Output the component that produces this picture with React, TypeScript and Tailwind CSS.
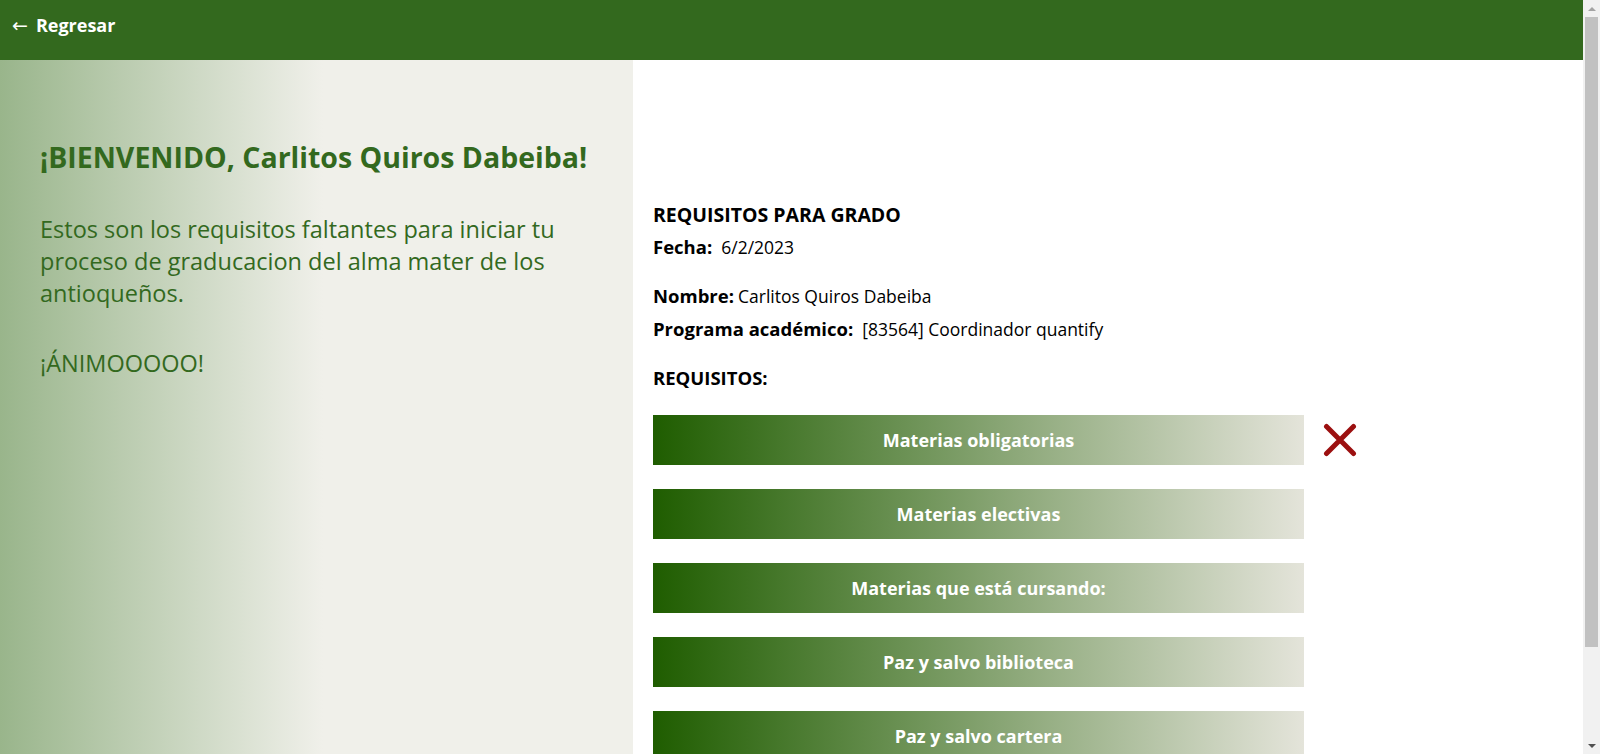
const REQUISITOS = [
  { label: "Materias obligatorias", missing: true },
  { label: "Materias electivas", missing: false },
  { label: "Materias que está cursando:", missing: false },
  { label: "Paz y salvo biblioteca", missing: false },
  { label: "Paz y salvo cartera", missing: false },
  { label: "Paz y salvo laboratorios", missing: false },
];

function MissingMark() {
  return (
    <svg width="34" height="34" viewBox="0 0 34 34" className="mt-[8px] ml-[19px] shrink-0">
      <path
        d="M3.5 3.5 L30.5 30.5 M30.5 3.5 L3.5 30.5"
        stroke="#9c1010"
        strokeWidth="5"
        strokeLinecap="round"
        fill="none"
      />
    </svg>
  );
}

export default function App() {
  return (
    <div className="h-screen flex bg-white font-['Open_Sans','Noto_Sans',sans-serif]">
      <div className="flex-1 overflow-hidden">
        <header className="h-[60px] bg-[#33691e] px-3 pt-[12px]">
          <a href="#" className="text-white text-[18px] font-bold leading-[27px]">
            <span className="font-['DejaVu_Sans',sans-serif] font-normal text-[19px] mr-[8px]">←</span>Regresar
          </a>
        </header>

        <main className="flex">
          <aside className="w-[633px] shrink-0 bg-[linear-gradient(to_right,#99b58b_0%,#f0f0ea_51%,#f0f0ea_100%)] pl-10 pr-[50px] pt-[79px] text-[#33691e]">
            <h1 className="text-[28.5px] font-bold leading-[36px] whitespace-nowrap">
              ¡BIENVENIDO, Carlitos Quiros Dabeiba!
            </h1>
            <p className="mt-[38px] text-[23.5px] leading-[32px]">
              Estos son los requisitos faltantes para iniciar tu proceso de
              graducacion del alma mater de los antioqueños.
            </p>
            <p className="mt-[38px] text-[23.5px] leading-[32px]">¡ÁNIMOOOOO!</p>
          </aside>

          <section className="flex-1 pl-5 pt-[141px] pb-[28px] text-black">
            <h2 className="text-[19.5px] font-bold leading-[28px]">
              REQUISITOS PARA GRADO
            </h2>
            <p className="mt-[2px] text-[18.5px] leading-[32px]">
              <span className="font-bold">Fecha:</span>
              <span className="ml-[9px] text-[17.5px]">6/2/2023</span>
            </p>

            <div className="mt-[16px]">
              <p className="text-[18.5px] leading-[33px]">
                <span className="font-bold">Nombre:</span>
                <span className="ml-[4px] text-[17.5px]">Carlitos Quiros Dabeiba</span>
              </p>
              <p className="text-[18.5px] leading-[32px]">
                <span className="font-bold">Programa académico:</span>
                <span className="ml-[9px] text-[17.5px]">[83564] Coordinador quantify</span>
              </p>
            </div>

            <h3 className="mt-[18px] text-[18.5px] font-bold leading-[30px]">
              REQUISITOS:
            </h3>

            <div className="mt-[22px] flex flex-col gap-6">
              {REQUISITOS.map((r) => (
                <div key={r.label} className="flex items-start">
                  <button className="w-[651px] h-[50px] shrink-0 bg-[linear-gradient(to_right,#1f5d00,#e4e4da)] text-white text-[18px] font-bold">
                    {r.label}
                  </button>
                  {r.missing && <MissingMark />}
                </div>
              ))}
            </div>
          </section>
        </main>
      </div>

      {/* scrollbar */}
      <div className="w-[17px] shrink-0 bg-[#f1f1f1] flex flex-col items-center">
        <div className="h-[17px] flex items-center justify-center">
          <div className="w-0 h-0 border-x-[4px] border-x-transparent border-b-[4px] border-b-[#a3a3a3]" />
        </div>
        <div className="w-[13px] h-[630px] bg-[#c1c1c1]" />
        <div className="flex-1" />
        <div className="h-[17px] flex items-center justify-center">
          <div className="w-0 h-0 border-x-[4px] border-x-transparent border-t-[4px] border-t-[#505050]" />
        </div>
      </div>
    </div>
  );
}
